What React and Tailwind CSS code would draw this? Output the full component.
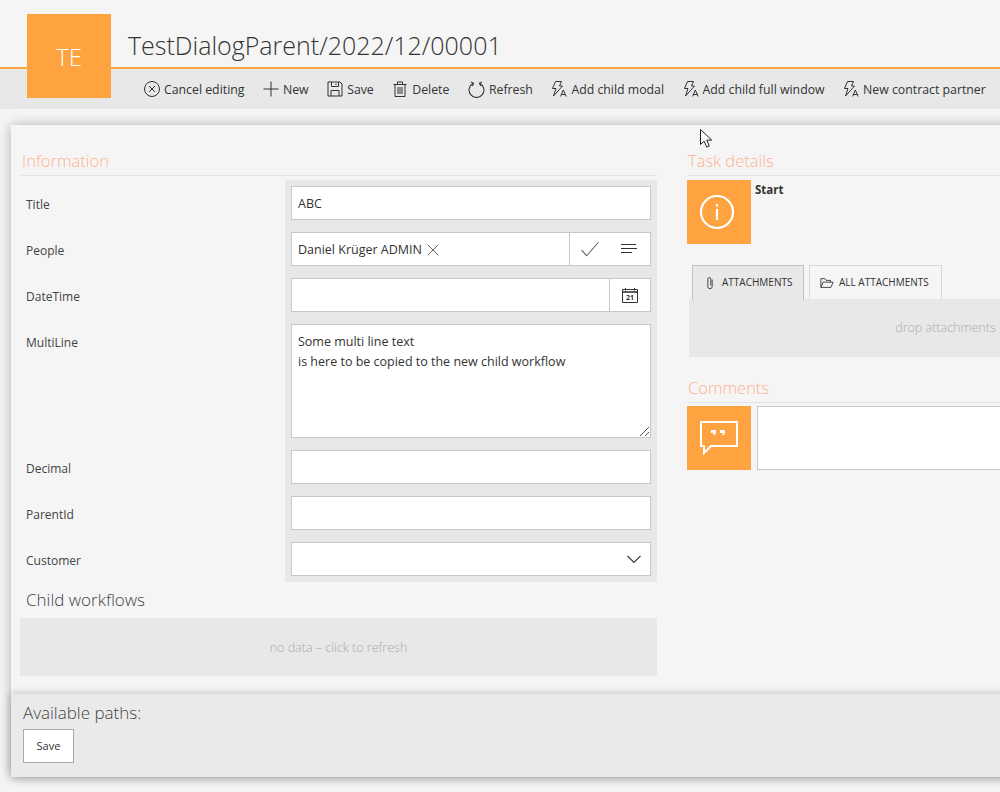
const font = { fontFamily: '"Open Sans", "Noto Sans", sans-serif' }

function Ico({ children, className = 'w-4 h-4' }) {
  return (
    <svg viewBox="0 0 16 16" fill="none" stroke="currentColor" strokeWidth="1" className={`${className} shrink-0`}>
      {children}
    </svg>
  )
}

const Flash = () => (
  <Ico>
    <path d="M4.500.5h6L8.500 5h3L2.500 15l2.500-7.500H1.500z" strokeLinejoin="miter" />
    <path d="M9.500 15.500l2.800-6.500 2.900 6.500M10.500 13.500h3.600" />
  </Ico>
)

const toolbar = [
  { label: 'Cancel editing', icon: <Ico><circle cx="8" cy="8" r="7.500" /><path d="M5 5l6 6M11 5l-6 6" /></Ico> },
  { label: 'New', icon: <Ico><path d="M8 .5v15M.5 8h15" /></Ico> },
  { label: 'Save', icon: <Ico><path d="M1 1h12l2 2v12H1z" /><path d="M4.500 1v4.500h7V1M4 15v-5.500h8V15M9 2.500v1.500" /></Ico> },
  { label: 'Delete', icon: <Ico><path d="M1.500 3.500h13M5.500 3.500v-2.500h5v2.500M3 3.500V15.500h10V3.500M6 6v7M8 6v7M10 6v7" /></Ico> },
  { label: 'Refresh', icon: <Ico className="w-[17px] h-[17px]"><path d="M5 2.200a7 7 0 1 0 6 0" /><path d="M2.600 .8l2.600 1.400L4 4.800M13.200 .8l-2.400 1.400 1.200 2.600" /></Ico> },
  { label: 'Add child modal', icon: <Flash /> },
  { label: 'Add child full window', icon: <Flash /> },
  { label: 'New contract partner', icon: <Flash /> },
]

function Row({ label, first, last, children }) {
  return (
    <>
      <div className={`pl-[5px] text-xs text-[#444] leading-4 ${first ? 'pt-[17px]' : 'pt-[11px]'}`}>{label}</div>
      <div className={`bg-[#e8e8e8] px-1.5 ${last ? 'pb-1.5' : 'pb-3'} ${first ? 'pt-1.5' : ''}`}>{children}</div>
    </>
  )
}

const boxCls = 'bg-white border border-[#c8c8c8] h-[34px] flex items-center text-[12.5px] text-[#333]'

function Heading({ children, className = 'pl-px' }) {
  return (
    <div className={`border-b border-[#e4e4e4] h-[27px] text-[16.5px] leading-[24px] font-light text-[#ffb290] ${className}`}>
      {children}
    </div>
  )
}

function OrangeBox({ children }) {
  return <div className="w-16 h-16 bg-[#ffa340] flex items-center justify-center shrink-0">{children}</div>
}

export default function App() {
  return (
    <div style={font} className="relative w-[1000px] h-[792px] overflow-hidden bg-[#f5f5f5] text-[#333]">
      {/* header */}
      <div className="h-[69px] border-b-2 border-[#ffa340] pl-[128px] pt-[27px]">
        <h1 className="text-[25px] leading-9 font-light text-[#333] whitespace-nowrap">TestDialogParent/2022/12/00001</h1>
      </div>
      <div className="absolute left-[27px] top-[14px] w-[84px] h-[84px] bg-[#ffa340] text-white flex items-end justify-center pb-[25px] text-[24px] leading-8 font-light">
        TE
      </div>
      <div className="h-10 bg-[#e8e8e8] pl-[144px] flex items-center gap-[18.5px] text-[12.3px] text-[#333] whitespace-nowrap">
        {toolbar.map((t) => (
          <div key={t.label} className="flex items-center gap-1">
            {t.icon}
            <span className="pt-[2px]">{t.label}</span>
          </div>
        ))}
      </div>

      {/* card */}
      <div className="ml-[11px] mt-4 w-[1300px] h-[652px] bg-[#f5f5f5] shadow-[0_0_12px_rgba(0,0,0,0.28)] flex flex-col">
        <div className="flex-1 pt-6 pl-[10px] flex">
          <div className="w-[636px] shrink-0">
            <Heading>Information</Heading>
            <div className="grid grid-cols-[264px_372px] mt-[4px]">
              <Row label="Title" first>
                <div className={`${boxCls} pl-[6px] pt-[3px]`}>ABC</div>
              </Row>
              <Row label="People">
                <div className={boxCls}>
                  <div className="flex-1 pl-[6px] pt-[2px] flex items-center gap-[5px]">
                    Daniel Krüger ADMIN
                    <Ico className="w-3 h-3"><path d="M1 1l14 14M15 1L1 15" /></Ico>
                  </div>
                  <div className="w-[81px] h-full border-l border-[#c8c8c8] flex items-center justify-between pl-[11px] pr-[13px]">
                    <Ico className="w-[18px] h-[18px] text-[#666]"><path d="M.5 9l4.500 5L15.500 2" /></Ico>
                    <Ico><path d="M0 3.500h15M0 7.500h16M0 11.500h11" /></Ico>
                  </div>
                </div>
              </Row>
              <Row label="DateTime">
                <div className={boxCls}>
                  <div className="flex-1" />
                  <div className="w-[41px] h-full border-l border-[#c8c8c8] flex items-center justify-center">
                    <Ico>
                      <path d="M.5 2.500h15v13H.5z" />
                      <path d="M.5 5h15" strokeWidth="1.600" />
                      <path d="M3.500 1v2.500M12.500 1v2.500" />
                      <text x="8" y="13" textAnchor="middle" fontSize="7" fontWeight="700" fill="currentColor" stroke="none">21</text>
                    </Ico>
                  </div>
                </div>
              </Row>
              <Row label="MultiLine">
                <div className="relative bg-white border border-[#c8c8c8] h-[114px] px-[6px] pt-[7px] text-[12.5px] leading-[20px] text-[#333]">
                  Some multi line text
                  <br />
                  is here to be copied to the new child workflow
                  <svg viewBox="0 0 9 9" className="absolute right-px bottom-px w-[9px] h-[9px]" stroke="#555" fill="none">
                    <path d="M0 9l9-9M5 9l4-4" />
                  </svg>
                </div>
              </Row>
              <Row label="Decimal"><div className={boxCls} /></Row>
              <Row label="ParentId"><div className={boxCls} /></Row>
              <Row label="Customer" last>
                <div className={`${boxCls} justify-end pr-[9px]`}>
                  <Ico className="w-[14px] h-[14px]"><path d="M.5 4.500L8 12l7.500-7.500" strokeWidth="1.400" /></Ico>
                </div>
              </Row>
            </div>
            <div className="pl-[5px] mt-[6px] h-[30px] text-[17px] leading-[24px] font-light text-[#444]">Child workflows</div>
            <div className="h-[58px] bg-[#e8e8e8] flex items-center justify-center pt-[2px] text-[12.5px] font-light text-[#aaa] -ml-px w-[637px]">
              no data – click to refresh
            </div>
          </div>

          <div className="ml-[31px] w-[514px] shrink-0">
            <Heading className="pl-0">Task details</Heading>
            <div className="flex mt-[4px] -ml-px h-[64px]">
              <OrangeBox>
                <svg viewBox="0 0 36 36" fill="none" stroke="#fff" strokeWidth="2.200" className="w-[36px] h-[36px] mr-1">
                  <circle cx="18" cy="18" r="16" />
                  <path d="M18 15v11M18 10v2.500" />
                </svg>
              </OrangeBox>
              <span className="ml-1 text-[11.5px] font-bold text-[#333] leading-[20px]">Start</span>
            </div>
            <div className="mt-[21px] ml-1 flex items-end gap-[5px] text-[10px] h-[34px]">
              <div className="w-[112px] h-[35px] -mb-px pb-px z-10 bg-[#e8e8e8] border border-b-0 border-[#c0c0c0] flex items-center pl-[10px] gap-[5px]">
                <Ico className="w-[14px] h-[14px]"><path d="M10.500 4v8a2.500 2.500 0 0 1-5 0V3.500a1.700 1.700 0 0 1 3.400 0V11" /></Ico>
                ATTACHMENTS
              </div>
              <div className="w-[133px] h-[34px] border border-b-0 border-[#d8d8d8] flex items-center pl-[10px] gap-[5px]">
                <Ico className="w-[14px] h-[14px]"><path d="M1 13V3h4.500l1.500 2h5v2M1 13l2.500-6H15l-2.500 6z" /></Ico>
                ALL ATTACHMENTS
              </div>
            </div>
            <div className="h-[58px] bg-[#e8e8e8] ml-px flex items-center justify-center text-[12.5px] font-light text-[#aaa]">
              drop attachments
            </div>
            <div className="mt-[19px]"><Heading className="pl-0">Comments</Heading></div>
            <div className="flex mt-[3px] -ml-px gap-[6px]">
              <OrangeBox>
                <svg viewBox="0 0 38 34" fill="none" className="w-[38px] h-[34px]">
                  <path d="M1 1h36v24H11l-7 7v-7H1z" stroke="#fff" strokeWidth="2" />
                  <path d="M11 9h5v3l-1 2h-2l1-2h-3zM20 9h5v3l-1 2h-2l1-2h-3z" fill="#fff" />
                </svg>
              </OrangeBox>
              <div className="flex-1 h-16 bg-white border border-[#c8c8c8]" />
            </div>
          </div>
        </div>

        <div className="h-[83px] bg-[#eaeaea] shadow-[0_0_8px_rgba(0,0,0,0.25)] pl-3 pt-[7px]">
          <div className="text-[17px] leading-6 font-light text-[#444]">Available paths:</div>
          <button className="mt-1 w-[51px] h-[34px] bg-white border border-[#aaa] text-[11px] text-[#333]">Save</button>
        </div>
      </div>

      {/* mouse pointer caught in the screenshot */}
      <svg viewBox="0 0 14 20" className="absolute left-[700px] top-[129px] w-[14px] h-[20px]">
        <path d="M.5.5v15l3.600-3.400 2.600 6 2.600-1.100-2.600-5.900h5z" fill="#fff" stroke="#222" />
      </svg>
    </div>
  )
}
